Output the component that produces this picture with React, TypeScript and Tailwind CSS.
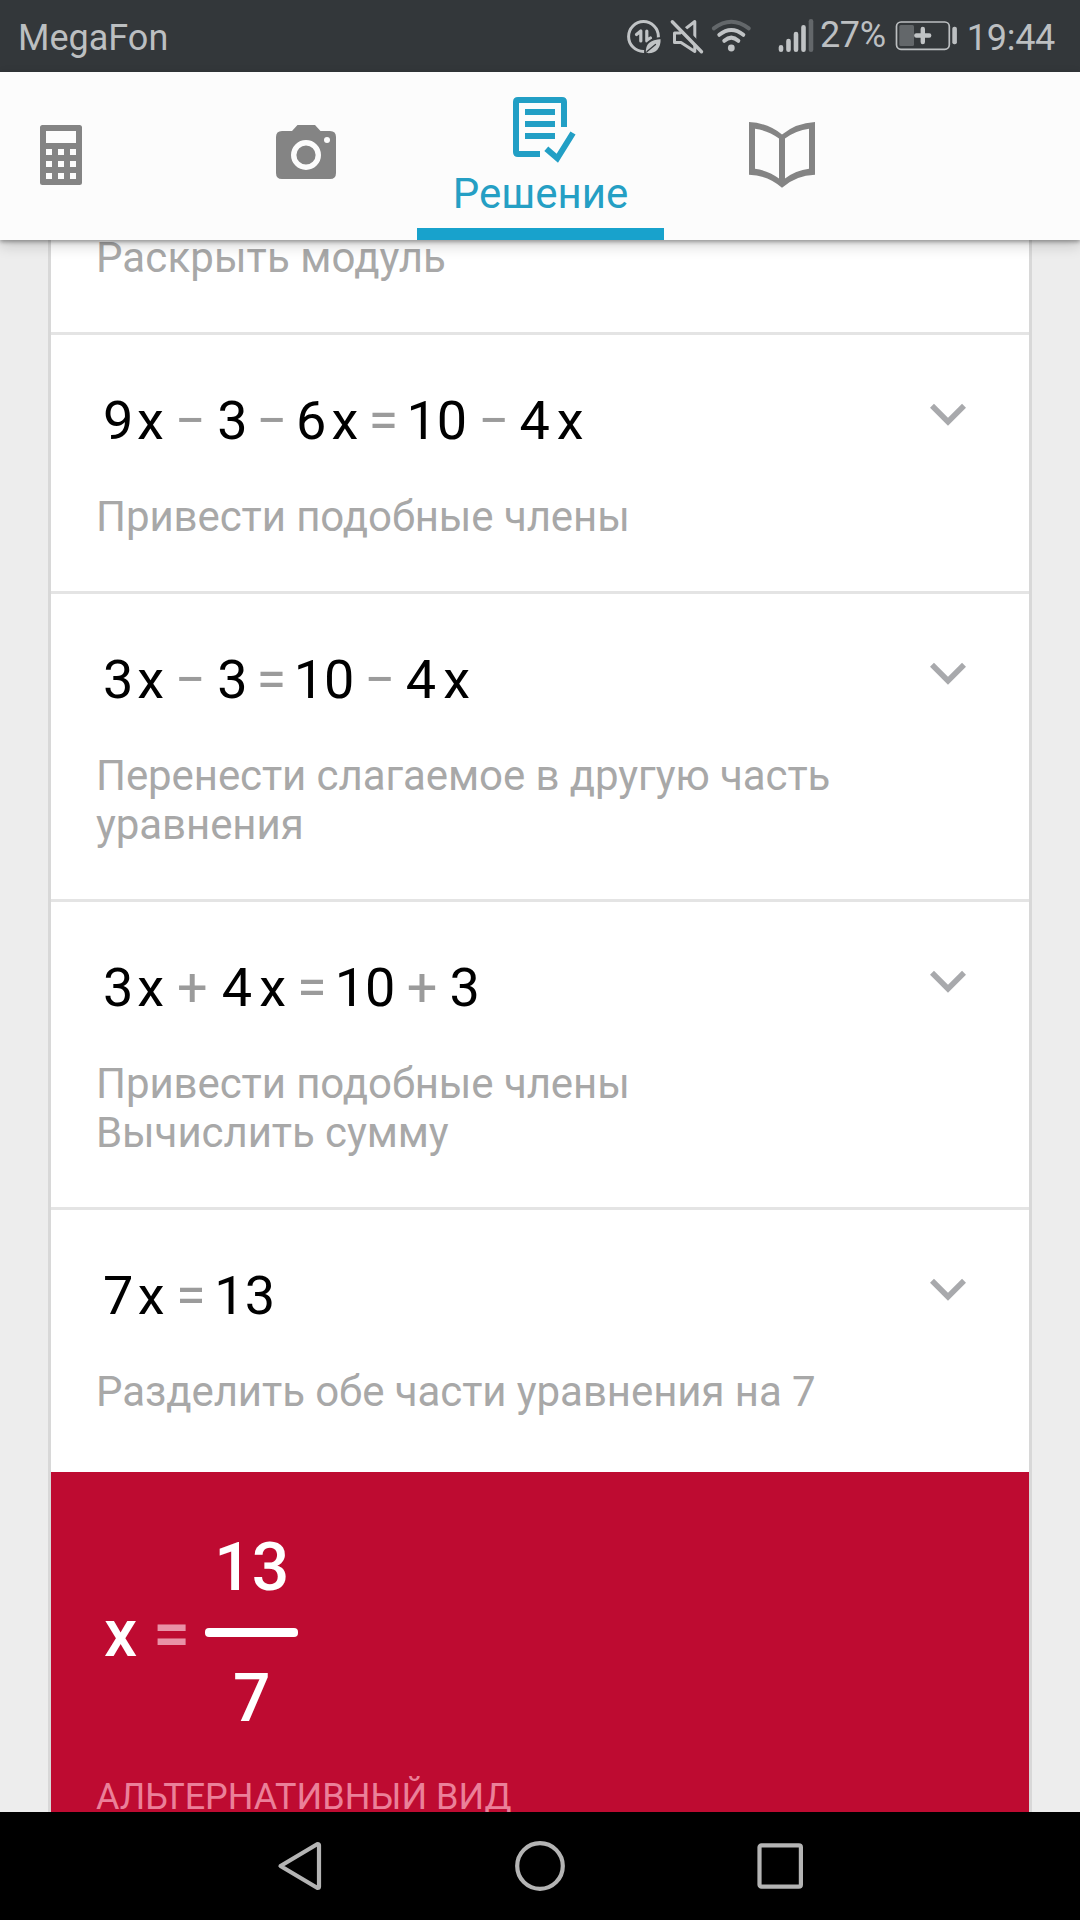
import type { ReactNode } from "react";

type Token = { t: string; m?: string; op?: boolean };

function StatusBar() {
  return (
    <div className="flex h-[72px] items-start bg-[#33373a] pr-[25px] pl-[18px] text-[36px] leading-[42px] text-[#bcbfc1]">
      <span className="mt-[17px]">MegaFon</span>
      <svg className="ml-auto h-[72px] w-[192px]" viewBox="624 0 192 72" fill="none" strokeLinecap="round" strokeLinejoin="round">
        {/* data saver */}
        <circle cx="644.5" cy="36.5" r="14.9" stroke="#c0c3c5" strokeWidth="3" />
        <path d="M637.5 34.5 641.8 31V41M647.8 31V41L651.5 38" stroke="#c0c3c5" strokeWidth="3.2" />
        <path d="M646 52.5C645.5 44 650 38.5 662.5 38C663 49 657.5 54.5 648.5 54Z" fill="#c0c3c5" stroke="#33373a" strokeWidth="1.8" />
        <path d="M648 51.5 656.5 44.5" stroke="#33373a" strokeWidth="1.3" />
        {/* muted speaker */}
        <path d="M681 33H675.5V42.6H682L695.8 51.5V21.5L681 33" stroke="#c0c3c5" strokeWidth="3" />
        <path d="M674.5 18.8 705 49.5" stroke="#33373a" strokeWidth="4.5" />
        <path d="M673.3 21.8 702.5 51.8" stroke="#c0c3c5" strokeWidth="3.4" />
        {/* wifi */}
        <path d="M714.8 28.4Q732.3 15 749.8 28.4" stroke="#63676a" strokeWidth="4" />
        <path d="M720.3 34.8Q732.3 25.2 744.3 34.8" stroke="#c0c3c5" strokeWidth="4" />
        <path d="M725.3 40.8Q732.3 34.6 739.3 40.8" stroke="#c0c3c5" strokeWidth="4" />
        <circle cx="732.3" cy="48" r="3.4" fill="#c0c3c5" />
        {/* signal strength */}
        <path d="M782 47.2V49.7M789.5 41V49.7M797 34V49.7M804.5 27.2V49.7" stroke="#c0c3c5" strokeWidth="4.6" />
        <path d="M812 21.3V49.7" stroke="#63676a" strokeWidth="4.6" />
      </svg>
      <span className="mt-[14px] ml-[4.500px] tracking-[-0.3px]">27%</span>
      <svg className="ml-[8px] h-[72px] w-[64px]" viewBox="894 0 64 72" fill="none">
        <rect x="896.5" y="22" width="52.8" height="27.3" rx="4.5" stroke="#bcbfc1" strokeWidth="1.7" />
        <rect x="899.3" y="25" width="14.7" height="21" rx="1.5" fill="#63676a" />
        <path d="M916.3 35.5H929.2M922.8 29V42" stroke="#c0c3c5" strokeWidth="4.4" strokeLinecap="round" />
        <rect x="952.3" y="26.8" width="4.6" height="17.4" rx="2" fill="#bcbfc1" />
      </svg>
      <span className="mt-[17px] ml-[9px] tracking-[-0.3px]">19:44</span>
    </div>
  );
}

function TabBar() {
  return (
    <nav className="relative z-10 flex h-[168px] bg-[#fcfcfc] shadow-[0_2px_4px_rgba(0,0,0,0.32),0_6px_13px_rgba(0,0,0,0.16)]">
      <button className="flex w-[194px] items-start pt-[53px] pl-10">
        <svg className="h-[60px] w-[42px]" viewBox="0 0 42 60" fill="#848484">
          <path
            fillRule="evenodd"
            d="M2.5 0H39.5Q42 0 42 2.5V57.5Q42 60 39.5 60H2.5Q0 60 0 57.5V2.5Q0 0 2.5 0ZM6 6V18H36V6ZM6 24V30H12V24ZM18 24V30H24V24ZM30 24V30H36V24ZM6 36V42H12V36ZM18 36V42H24V36ZM30 36V42H36V36ZM6 48V54H12V48ZM18 48V54H24V48ZM30 48V54H36V48Z"
          />
        </svg>
      </button>
      <button className="flex w-[223px] items-start justify-center pt-[53px]">
        <svg className="h-[54px] w-[60px]" viewBox="0 0 60 54">
          <path d="M6 6H16L21.5 0H39L44.5 6H54Q60 6 60 12V48Q60 54 54 54H6Q0 54 0 48V12Q0 6 6 6Z" fill="#848484" />
          <circle cx="30" cy="30" r="12.3" fill="none" stroke="#fcfcfc" strokeWidth="5.4" />
          <circle cx="51" cy="15" r="3" fill="#fcfcfc" />
        </svg>
      </button>
      <button className="flex w-[247px] flex-col items-center border-b-[12px] border-[#18a2cc] pt-[25px] text-[42px] leading-[49px] text-[#259fc4]">
        <svg className="h-[66px] w-[73px]" viewBox="504 97 73 66" fill="none" stroke="#229fc5" strokeWidth="6">
          <path d="M540 154H518Q516 154 516 152V102Q516 100 518 100H562Q564 100 564 102V127" />
          <path d="M525 112H555M525 124H555M525 136H555" />
          <path d="M546.3 148.8 557.3 158.3 573 133" />
        </svg>
        <span className="mt-[6px]">Решение</span>
      </button>
      <button className="flex w-[236px] items-start justify-center pt-[49.500px]">
        <svg className="h-[66px] w-[66px]" viewBox="749 121.5 66 66" fill="#848484">
          <path
            fillRule="evenodd"
            d="M749 121.5Q768 122.5 782 134Q796 122.5 815 121.5V174.3Q796 174.8 782 187.3Q768 174.8 749 174.3ZM755 128.3V168.3Q768 169.8 779 178V138Q768 130 755 128.3ZM809 128.3Q796 130 785 138V178Q796 169.8 809 168.3Z"
          />
        </svg>
      </button>
    </nav>
  );
}

function Step({ eq, last, children }: { eq: Token[]; last?: boolean; children: ReactNode }) {
  return (
    <section className={last ? "pb-[56px]" : "border-b-[3px] border-[#e4e4e4] pb-[50px]"}>
      <div className="flex h-[118px] items-start justify-between pr-[63px] pl-[52px]">
        <div className="flex pt-[53px] text-[54px] leading-[65px] text-black">
          {eq.map((k, i) => (
            <span key={i} className={`${k.m ?? ""} ${k.op ? "text-[#9b9b9b]" : ""}`}>
              {k.t}
            </span>
          ))}
        </div>
        <svg className="mt-[68px] h-[24px] w-[36px]" viewBox="0 0 36 24" fill="none">
          <path d="M2 2.8 18 18.8 34 2.8" stroke="#a8a9ac" strokeWidth="5.6" />
        </svg>
      </div>
      <p className="mt-[39px] pl-[45px] text-[42px] leading-[49px] tracking-[-0.08px] text-[#a8a8a8]">{children}</p>
    </section>
  );
}

const step1: Token[] = [
  { t: "9" },
  { t: "x", m: "ml-[3.6px]" },
  { t: "−", m: "ml-[11.2px]", op: true },
  { t: "3", m: "ml-[11.3px]" },
  { t: "−", m: "ml-[9.1px]", op: true },
  { t: "6", m: "ml-[8.6px]" },
  { t: "x", m: "ml-[5px]" },
  { t: "=", m: "ml-[10.4px]", op: true },
  { t: "10", m: "ml-[8.2px]" },
  { t: "−", m: "ml-[11.4px]", op: true },
  { t: "4", m: "ml-[10.2px]" },
  { t: "x", m: "ml-[6.8px]" },
];

const step2: Token[] = [
  { t: "3" },
  { t: "x", m: "ml-[3.8px]" },
  { t: "−", m: "ml-[11px]", op: true },
  { t: "3", m: "ml-[11.3px]" },
  { t: "=", m: "ml-[9.1px]", op: true },
  { t: "10", m: "ml-[7.4px]" },
  { t: "−", m: "ml-[10.2px]", op: true },
  { t: "4", m: "ml-[10.4px]" },
  { t: "x", m: "ml-[7px]" },
];

const step3: Token[] = [
  { t: "3" },
  { t: "x", m: "ml-[3.8px]" },
  { t: "+", m: "ml-[13px]", op: true },
  { t: "4", m: "ml-[14.2px]" },
  { t: "x", m: "ml-[7px]" },
  { t: "=", m: "ml-[11px]", op: true },
  { t: "10", m: "ml-[8.1px]" },
  { t: "+", m: "ml-[11.4px]", op: true },
  { t: "3", m: "ml-[12.2px]" },
];

const step4: Token[] = [
  { t: "7" },
  { t: "x", m: "ml-[4.5px]" },
  { t: "=", m: "ml-[11.4px]", op: true },
  { t: "13", m: "ml-[8.6px]" },
];

function Answer() {
  return (
    <section className="h-[340px] overflow-hidden bg-[#be0b31] text-white">
      <div className="flex items-start pl-[53px] text-[66px] leading-[77px] font-medium">
        <span className="mt-[123px]">x</span>
        <span className="mt-[124px] ml-[15.8px] text-[#e992a7]">=</span>
        <div className="ml-[15.2px] flex w-[93px] flex-col items-center pt-[57px]">
          <span>13</span>
          <span className="mt-[22px] h-[9px] w-full rounded-[4px] bg-white" />
          <span className="mt-[23px]">7</span>
        </div>
      </div>
      <p className="mt-[39px] pl-[45px] text-[36px] leading-[42px] text-[#eb8099]">АЛЬТЕРНАТИВНЫЙ ВИД</p>
    </section>
  );
}

function NavBar() {
  return (
    <div className="flex h-[108px] items-center justify-center gap-[190px] bg-black">
      <svg className="h-[50px] w-[50px]" viewBox="0 0 50 50" fill="none" stroke="#b4b4b4" strokeWidth="4.2" strokeLinejoin="round">
        <path d="M5.5 25 42.5 3Q44 3 44 4.5V45.5Q44 47 42.5 47Z" />
      </svg>
      <svg className="h-[50px] w-[50px]" viewBox="0 0 50 50" fill="none" stroke="#b4b4b4" strokeWidth="4.2">
        <circle cx="25" cy="25" r="22.8" />
      </svg>
      <svg className="h-[50px] w-[50px]" viewBox="0 0 50 50" fill="none" stroke="#b4b4b4" strokeWidth="4.2">
        <rect x="4.5" y="4.3" width="41.4" height="41.4" rx="2" />
      </svg>
    </div>
  );
}

export default function App() {
  return (
    <div className="flex h-[1920px] w-[1080px] flex-col overflow-hidden bg-[#ededed] font-['Roboto',sans-serif]">
      <StatusBar />
      <TabBar />
      <main className="mx-[48px] h-[1572px] overflow-hidden border-x-[3px] border-[#d8d8d8] bg-white">
        <section className="-mt-[7px] border-b-[3px] border-[#e4e4e4] pb-[50px]">
          <p className="pl-[45px] text-[42px] leading-[49px] tracking-[0.1px] text-[#a8a8a8]">Раскрыть модуль</p>
        </section>
        <Step eq={step1}>Привести подобные члены</Step>
        <Step eq={step2}>
          Перенести слагаемое в другую часть
          <br />
          уравнения
        </Step>
        <Step eq={step3}>
          Привести подобные члены
          <br />
          Вычислить сумму
        </Step>
        <Step eq={step4} last>
          Разделить обе части уравнения на 7
        </Step>
        <Answer />
      </main>
      <NavBar />
    </div>
  );
}
